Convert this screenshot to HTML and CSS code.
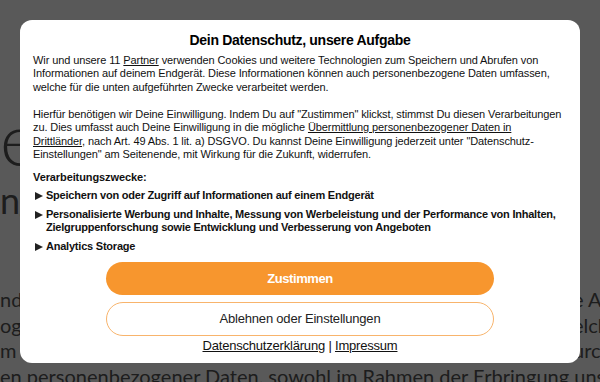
FILE: index.html
```html
<!DOCTYPE html>
<html lang="de">
<head>
  <meta charset="UTF-8">
  <title>Datenschutz</title>
  <link rel="stylesheet" href="styles.css">
</head>
<body>
  <div class="page">
    <h1 class="page-title">erklärung</h1>
    <h2 class="page-sub">ng zum Datenschutz</h2>
    <div class="page-text">
      <p class="row"><span>ndeten Daten werden ausschließlich</span><span>e Angaben</span></p>
      <p class="row"><span>ogenen Daten, die wir erheben</span><span>elche Daten</span></p>
      <p class="row"><span>m Rahmen unserer Tätigkeit</span><span>urch die Nutzung</span></p>
      <p class="row full"><span>en personenbezogener Daten, sowohl im Rahmen der Erbringung unserer Leistungen</span></p>
    </div>
  </div>

  <div class="overlay">
    <div class="consent">
      <h2 class="consent-title">Dein Datenschutz, unsere Aufgabe</h2>
      <p class="text">Wir und unsere 11 <a href="#">Partner</a> verwenden Cookies und weitere Technologien zum Speichern und Abrufen von Informationen auf deinem Endgerät. Diese Informationen können auch personenbezogene Daten umfassen, welche für die unten aufgeführten Zwecke verarbeitet werden.</p>
      <p class="text">Hierfür benötigen wir Deine Einwilligung. Indem Du auf "Zustimmen" klickst, stimmst Du diesen Verarbeitungen zu. Dies umfasst auch Deine Einwilligung in die mögliche <a href="#">Übermittlung personenbezogener Daten in Drittländer</a>, nach Art. 49 Abs. 1 lit. a) DSGVO. Du kannst Deine Einwilligung jederzeit unter "Datenschutz-Einstellungen" am Seitenende, mit Wirkung für die Zukunft, widerrufen.</p>
      <p class="purposes-title">Verarbeitungszwecke:</p>
      <ul class="purposes">
        <li>Speichern von oder Zugriff auf Informationen auf einem Endgerät</li>
        <li>Personalisierte Werbung und Inhalte, Messung von Werbeleistung und der Performance von Inhalten, Zielgruppenforschung sowie Entwicklung und Verbesserung von Angeboten</li>
        <li>Analytics Storage</li>
      </ul>
      <div class="actions">
        <button class="btn btn-accept">Zustimmen</button>
        <button class="btn btn-settings">Ablehnen oder Einstellungen</button>
        <div class="legal"><a href="#">Datenschutzerklärung</a> | <a href="#">Impressum</a></div>
      </div>
    </div>
  </div>
</body>
</html>
```

FILE: styles.css
```css
html, body {
  height: 100%;
  margin: 0;
  overflow: hidden;
}
body {
  background: #fff;
  font-family: Lato, "Liberation Sans", sans-serif;
  color: #555;
}
.page {
  padding-top: 98px;
}
.page-title {
  margin: 0;
  font-size: 72px;
  font-weight: 300;
  line-height: 80px;
  white-space: nowrap;
}
.page-sub {
  margin: 0;
  font-size: 36px;
  font-weight: 400;
  line-height: 44px;
  letter-spacing: -1px;
  white-space: nowrap;
}
.page-text {
  margin-top: 65px;
}
.row {
  display: grid;
  grid-template-columns: 573px 1fr;
  margin: 0;
  font-size: 20px;
  line-height: 25.5px;
  white-space: nowrap;
}
.row span {
  overflow: hidden;
}
.row.full {
  grid-template-columns: 1fr;
}

.overlay {
  position: fixed;
  inset: 0;
  background: rgba(0, 0, 0, 0.65);
  display: flex;
  align-items: center;
  justify-content: center;
}
.consent {
  width: 531px;
  padding: 12px 16px 9.5px 13px;
  background: #fff;
  border-radius: 12px;
  font-family: "Liberation Sans", Arial, sans-serif;
  font-size: 11px;
  line-height: 13.5px;
  letter-spacing: -0.1px;
  color: #111;
}
.consent a {
  color: #111;
}
.consent-title {
  margin: 0 0 6px;
  padding-left: 3px;
  font-size: 14px;
  line-height: 16px;
  letter-spacing: -0.3px;
  text-align: center;
  color: #000;
}
.text {
  margin: 0;
}
.text + .text {
  margin-top: 13.5px;
}
.purposes-title {
  margin: 9.25px 0 0;
  font-weight: bold;
  letter-spacing: -0.1px;
}
.purposes {
  list-style: none;
  margin: 4.75px 0 0;
  padding: 0;
  font-weight: bold;
  line-height: 13px;
  letter-spacing: -0.22px;
}
.purposes li {
  display: flex;
  align-items: flex-start;
}
.purposes li + li {
  margin-top: 6px;
}
.purposes li::before {
  content: "";
  flex: none;
  width: 0;
  height: 0;
  margin: 3px 3px 0 2px;
  border-left: 8px solid #222;
  border-top: 4.5px solid transparent;
  border-bottom: 4.5px solid transparent;
}
.actions {
  margin-top: 8.5px;
  padding-left: 3px;
  display: flex;
  flex-direction: column;
  align-items: center;
  gap: 7px;
}
.btn {
  width: 388px;
  border-radius: 17px;
  font-family: "Liberation Sans", Arial, sans-serif;
  font-size: 13px;
  letter-spacing: -0.2px;
  cursor: pointer;
}
.btn-accept {
  height: 33px;
  border: none;
  background: #f7962e;
  color: #fff;
  font-weight: bold;
  letter-spacing: -0.4px;
}
.btn-settings {
  height: 34px;
  border: 1px solid #f8b46c;
  background: #fff;
  color: #222;
}
.legal {
  margin-top: -4.5px;
  font-size: 13px;
  line-height: 15px;
  letter-spacing: -0.2px;
  color: #111;
}
```
